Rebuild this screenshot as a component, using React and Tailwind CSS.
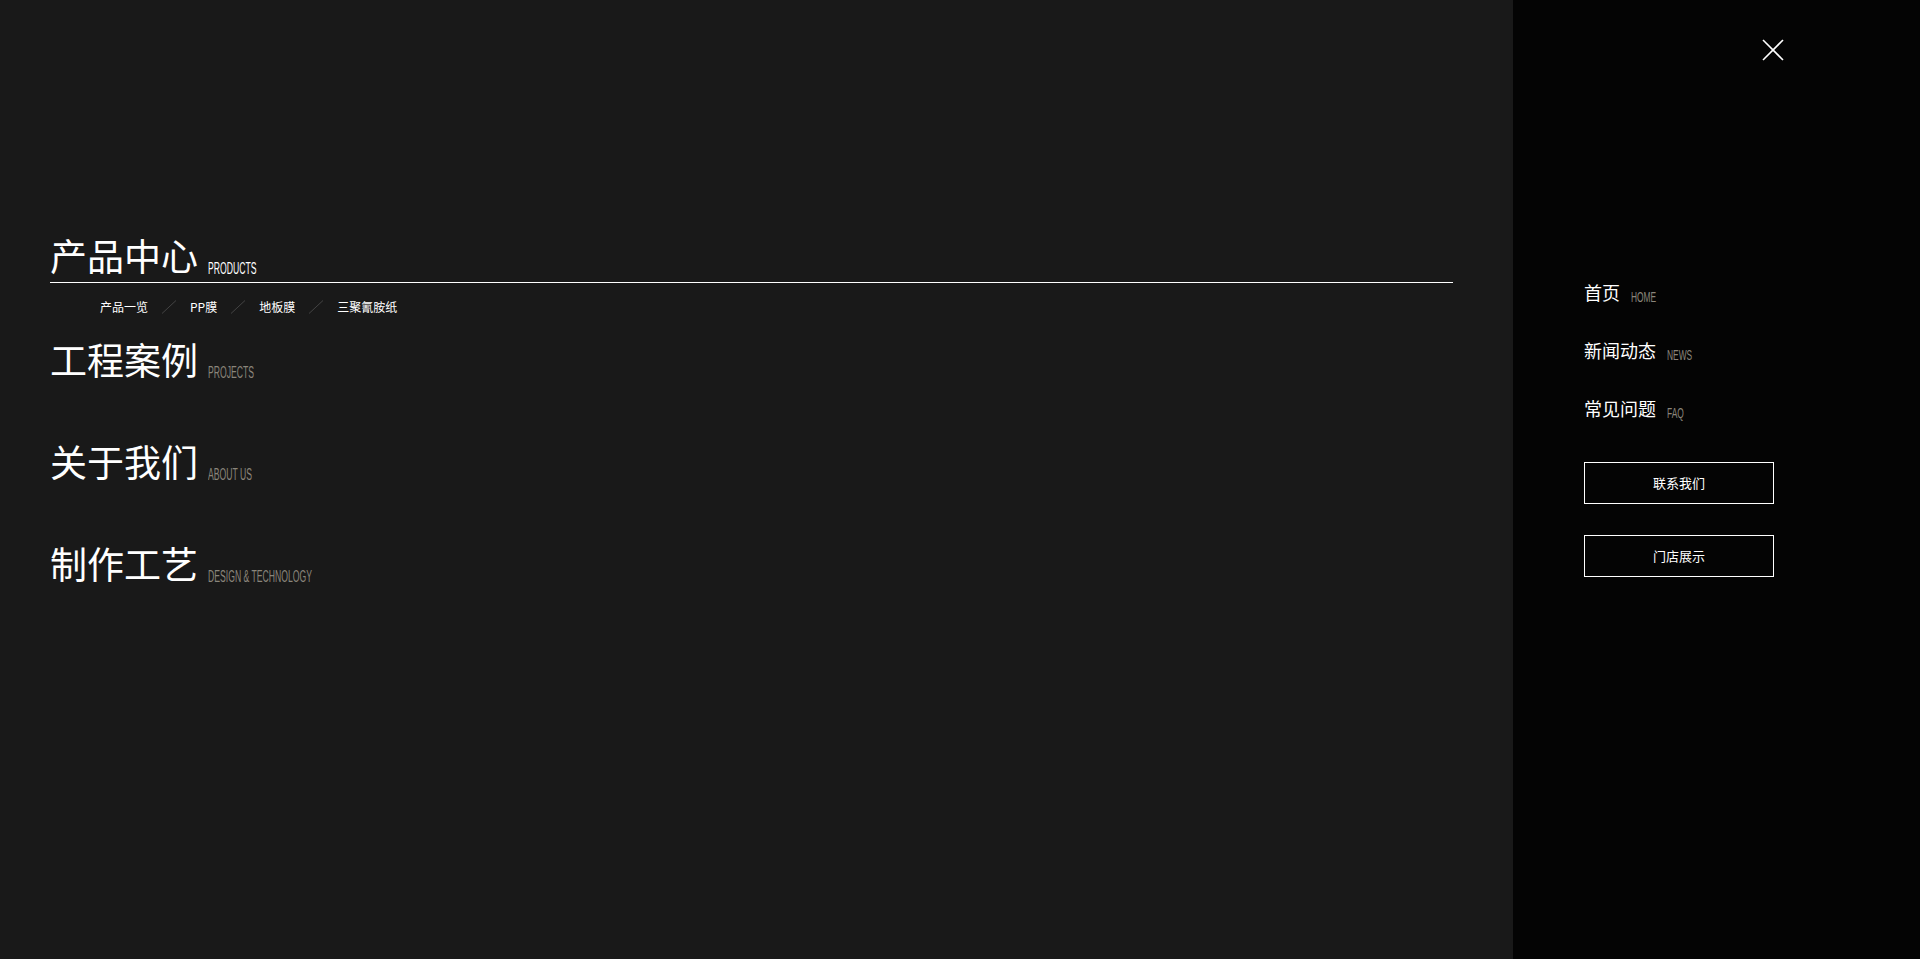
// Full-screen navigation overlay: main menu on the left, quick links on the right
const cjk = "font-['Noto_Sans_CJK_SC','Noto_Sans',sans-serif]";
const en = "font-['Liberation_Sans',Arial,sans-serif]";

const mainMenu = [
  { zh: "产品中心", en: "PRODUCTS", active: true },
  { zh: "工程案例", en: "PROJECTS" },
  { zh: "关于我们", en: "ABOUT US" },
  { zh: "制作工艺", en: "DESIGN & TECHNOLOGY" },
];

const subMenu = ["产品一览", "PP膜", "地板膜", "三聚氰胺纸"];

const sideMenu = [
  { zh: "首页", en: "HOME" },
  { zh: "新闻动态", en: "NEWS" },
  { zh: "常见问题", en: "FAQ" },
];

function Slash() {
  return (
    <svg width="16" height="14" viewBox="0 0 16 14" className="mx-[13px] shrink-0">
      <line x1="1" y1="13.5" x2="15" y2="0.5" stroke="#444" strokeWidth="1" />
    </svg>
  );
}

function MainItem({ item }) {
  return (
    <div className="flex items-end h-[44px]">
      <span className={`${cjk} text-[37px] leading-[44px] text-white`}>{item.zh}</span>
      <span
        className={`${en} ml-[10px] text-[16px] leading-none whitespace-nowrap origin-left scale-x-[0.54] ${
          item.active ? "text-white" : "text-[#8a857b]"
        }`}
      >
        {item.en}
      </span>
    </div>
  );
}

export default function App() {
  return (
    <div className="flex w-full h-screen overflow-hidden">
      {/* ── Main menu ───────────────────────────── */}
      <div className="flex-1 bg-[#191919] pl-[50px] pr-[60px] pt-[233px]">
        {/* active item with underline */}
        <div className="border-b border-white pb-[5px]">
          <MainItem item={mainMenu[0]} />
        </div>
        <div className={`${cjk} flex items-center h-[20px] mt-[14px] pl-[50px] text-[12px] text-white`}>
          {subMenu.map((s, i) => (
            <div key={s} className="flex items-center">
              {i > 0 && <Slash />}
              <span>{s}</span>
            </div>
          ))}
        </div>
        <div className="flex flex-col gap-[58px] mt-[20px]">
          {mainMenu.slice(1).map((m) => (
            <MainItem key={m.zh} item={m} />
          ))}
        </div>
      </div>

      {/* ── Side panel ──────────────────────────── */}
      <div className="w-[407px] shrink-0 bg-[#040404] flex flex-col pl-[71px] pt-[39px]">
        <button className="self-end mr-[136px] w-[22px] h-[22px]">
          <svg width="22" height="22" viewBox="0 0 22 22">
            <line x1="1" y1="1" x2="21" y2="21" stroke="white" strokeWidth="1.6" />
            <line x1="21" y1="1" x2="1" y2="21" stroke="white" strokeWidth="1.6" />
          </svg>
        </button>

        <div className="flex flex-col gap-[34px] mt-[219px]">
          {sideMenu.map((m) => (
            <div key={m.zh} className="flex items-end h-[24px]">
              <span className={`${cjk} text-[18px] leading-[24px] text-white`}>{m.zh}</span>
              <span
                className={`${en} ml-[11px] text-[15px] leading-none origin-left scale-x-[0.56] text-[#8a857b]`}
              >
                {m.en}
              </span>
            </div>
          ))}
        </div>

        <div className="flex flex-col gap-[31px] mt-[42px]">
          {["联系我们", "门店展示"].map((t) => (
            <div
              key={t}
              className={`${cjk} w-[190px] h-[42px] border border-white flex items-center justify-center text-[13px] text-white`}
            >
              {t}
            </div>
          ))}
        </div>
      </div>
    </div>
  );
}
